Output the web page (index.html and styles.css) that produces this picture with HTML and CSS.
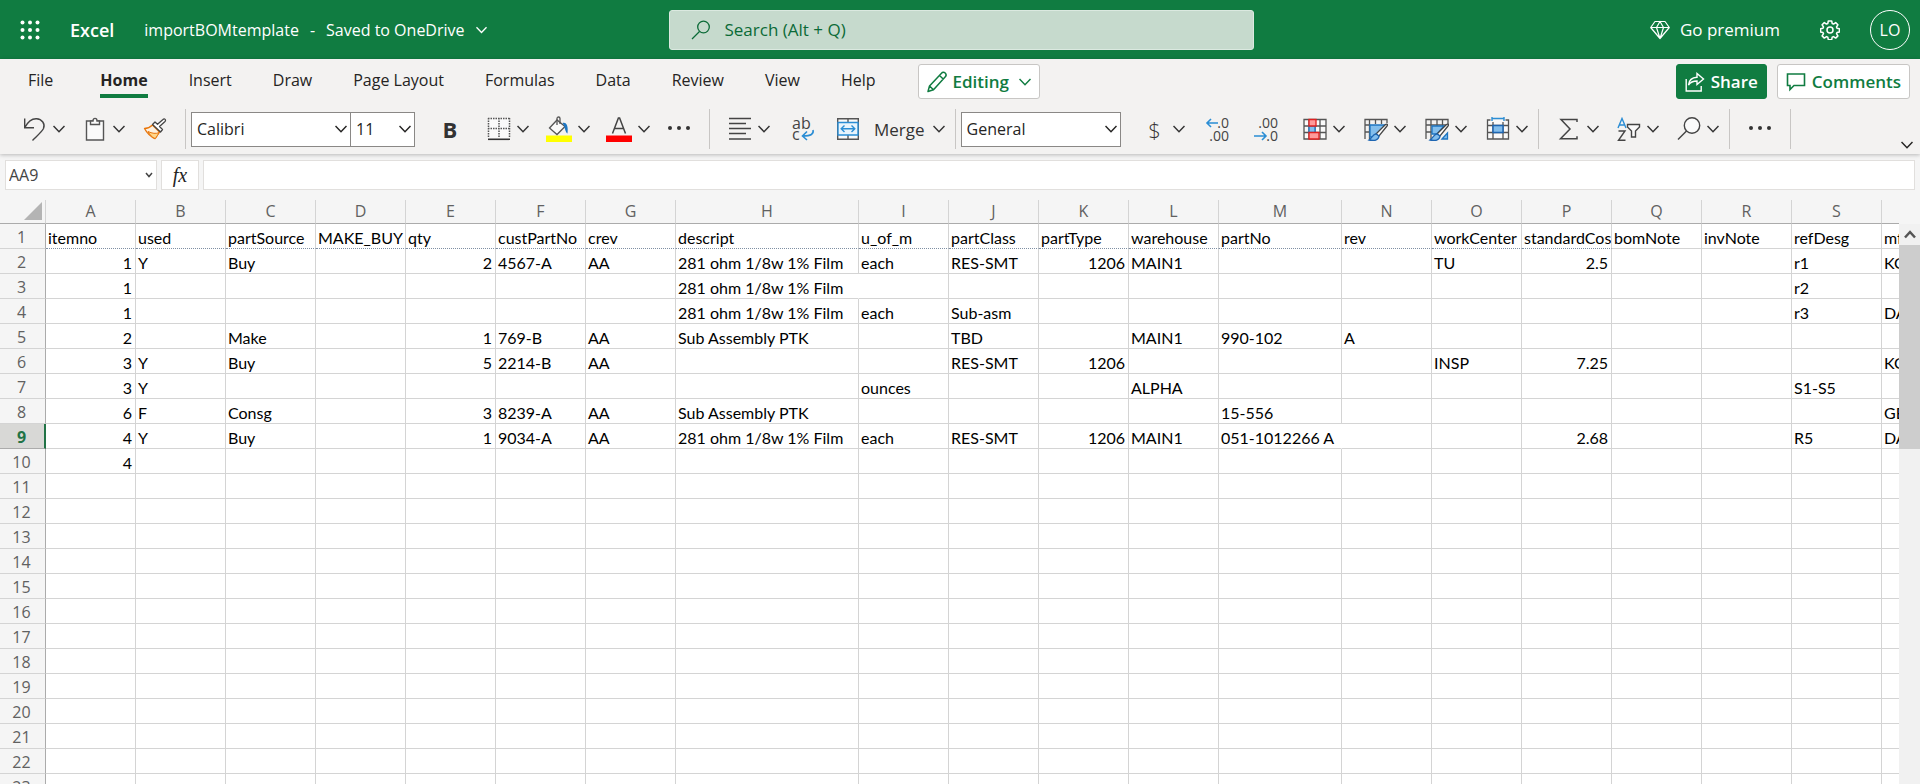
FILE: index.html
```html
<!DOCTYPE html>
<html lang="en">
<head>
    <meta charset="UTF-8">
    <meta name="viewport" content="width=device-width, initial-scale=1.0">
    <title>importBOMtemplate - Excel</title>
    <link rel="stylesheet" href="styles.css">
</head>
<body>
    <svg class="defs" width="0" height="0" aria-hidden="true">
        <symbol id="chevron" viewBox="0 0 12 8"><path d="M.5 1 6 6.700 11.500 1" fill="none" stroke="currentColor" stroke-width="1.500"/></symbol>
        <symbol id="dots" viewBox="0 0 24 24"><g fill="#333"><circle cx="3" cy="11" r="2"/><circle cx="12" cy="11" r="2"/><circle cx="21" cy="11" r="2"/></g></symbol>
    </svg>

    <header class="title-bar">
        <div class="title-left">
            <button class="waffle" aria-label="App launcher">
                <svg width="20" height="20" viewBox="0 0 20 20" fill="#fff">
                    <circle cx="2.500" cy="2.500" r="2"/><circle cx="10" cy="2.500" r="2"/><circle cx="17.500" cy="2.500" r="2"/>
                    <circle cx="2.500" cy="10" r="2"/><circle cx="10" cy="10" r="2"/><circle cx="17.500" cy="10" r="2"/>
                    <circle cx="2.500" cy="17.500" r="2"/><circle cx="10" cy="17.500" r="2"/><circle cx="17.500" cy="17.500" r="2"/>
                </svg>
            </button>
            <a class="app-name" href="#">Excel</a>
            <button class="file-name">
                <span>importBOMtemplate</span><span>-</span><span>Saved to OneDrive</span>
                <svg width="11" height="8"><use href="#chevron"/></svg>
            </button>
        </div>
        <label class="search">
            <svg width="20" height="20" viewBox="0 0 20 20" fill="none" stroke="#0b6a37" stroke-width="1.300"><circle cx="12.500" cy="7" r="5.800"/><path d="M8.500 11.500 1 19"/></svg>
            <input type="text" placeholder="Search (Alt + Q)" aria-label="Search">
        </label>
        <div class="title-right">
            <button class="premium">
                <svg width="20" height="20" viewBox="0 0 20 20" fill="none" stroke="#fff" stroke-width="1.200" stroke-linejoin="round"><path d="M5 1.500h10l4.300 6L10 18.500.7 7.500zM.7 7.500h18.600M6.500 7.500 10 18.500l3.500-11L10 1.500z"/></svg>
                Go premium
            </button>
            <button class="gear" aria-label="Settings">
                <svg width="20" height="20" viewBox="0 0 20 20" fill="none" stroke="#fff" stroke-width="1.500" stroke-linejoin="round"><circle cx="10" cy="10" r="3"/><path d="M8.300 1h3.400l.5 2.500 1.300.6 2.200-1.500 2.200 2.200-1.400 2.200.5 1.300 2.400.4v3.200l-2.400.5-.5 1.300 1.400 2.200-2.200 2.200-2.200-1.500-1.300.6-.5 2.500H8.300l-.5-2.500-1.300-.6-2.200 1.500-2.200-2.200 1.400-2.200-.5-1.300-2.400-.5V8.700L3 8.300 3.500 7 2.100 4.800l2.200-2.200 2.200 1.500 1.300-.6z"/></svg>
            </button>
            <button class="avatar">LO</button>
        </div>
    </header>

    <section class="ribbon">
        <div class="tab-row">
            <nav class="tabs">
                <a class="tab file" href="#">File</a>
                <a class="tab active" href="#">Home</a>
                <a class="tab" href="#">Insert</a>
                <a class="tab" href="#">Draw</a>
                <a class="tab" href="#">Page Layout</a>
                <a class="tab" href="#">Formulas</a>
                <a class="tab" href="#">Data</a>
                <a class="tab" href="#">Review</a>
                <a class="tab" href="#">View</a>
                <a class="tab" href="#">Help</a>
            </nav>
            <button class="btn editing">
                <svg width="20" height="22" viewBox="0 0 20 22" fill="none" stroke="currentColor" stroke-width="1.500" stroke-linejoin="round"><path d="M1 20.500 2.500 15 14.500 2.200a2.400 2.400 0 0 1 3.800 3.500L6.500 18.800zM12.500 4.500l3.700 3.500M2.500 15l4 3.800"/></svg>
                Editing
                <svg class="chev" width="12" height="8"><use href="#chevron"/></svg>
            </button>
            <div class="tab-actions">
                <button class="btn share">
                    <svg width="20" height="20" viewBox="0 0 20 20" fill="none" stroke="currentColor" stroke-width="1.400"><path d="M1.200 7v12h15v-5M3.500 13C4 8.500 7 5.500 12 5.300V1.500L18.500 7 12 12.500V9C8.500 9 5.500 10 3.500 13z"/></svg>
                    Share
                </button>
                <button class="btn comments">
                    <svg width="20" height="20" viewBox="0 0 20 20" fill="none" stroke="currentColor" stroke-width="1.600"><path d="M1.500 2h17v11.500H8L4 17.500v-4H1.500z"/></svg>
                    Comments
                </button>
            </div>
        </div>

        <div class="toolbar">
            <div class="group first">
                <button class="tool" aria-label="Undo">
                    <svg width="24" height="24" viewBox="0 0 24 24" fill="none" stroke="#444" stroke-width="1.400"><path d="M1.700 1.500v9.300H11M2 10.300C5 4.500 9 1.500 13.500 1.700 19 2 22.500 7 20.500 11.500 19 14.500 15 18 9.500 23.500"/></svg>
                    <svg class="chev" width="12" height="8"><use href="#chevron"/></svg>
                </button>
                <button class="tool" aria-label="Paste">
                    <svg width="24" height="24" viewBox="0 0 24 24" fill="#fafafa" stroke="#555" stroke-width="1.400"><path d="M3.500 4h17v19h-17z"/><path d="M7.500 7.500V4H10c0-3.500 4-3.500 4 0h2.500v3.500z"/></svg>
                    <svg class="chev" width="12" height="8"><use href="#chevron"/></svg>
                </button>
                <button class="tool" aria-label="Format painter">
                    <svg width="24" height="24" viewBox="0 0 24 24" fill="none" stroke-linejoin="round"><path d="M1.500 11.500c3.500 0 6-1.500 8-3.500l7 7c-2 2-2.500 4.500-4.500 6.500C8 20 4 16 1.500 11.500z" fill="#fdf1e0" stroke="#e8750a" stroke-width="1.400"/><path d="M5 14.500c4 2 8 2.500 11.500 1-2 2-2.500 4.500-4.500 6C9 20.500 7 18 5 14.500z" fill="#ffd68a" stroke="#e8750a"/><path d="m9.500 7.500 8 7.500 2-2.500-3-3 5.500-5c1.500-1.500-.5-3.500-2-2L14.500 7.300 12 5z" fill="#fff" stroke="#444" stroke-width="1.300"/></svg>
                </button>
            </div>
            <div class="group">
                <div class="fonts">
                    <label class="picker family">
                        <select aria-label="Font"><option>Calibri</option></select>
                        <svg class="chev" width="12" height="8"><use href="#chevron"/></svg>
                    </label>
                    <label class="picker size">
                        <select aria-label="Font size"><option>11</option></select>
                        <svg class="chev" width="12" height="8"><use href="#chevron"/></svg>
                    </label>
                </div>
                <button class="tool bold">B</button>
                <button class="tool" aria-label="Borders">
                    <svg width="24" height="24" viewBox="0 0 24 24" fill="none" stroke="#555"><path d="M1.500 1.500h21v20h-21z" fill="#fafafa" stroke="none"/><path d="M1 1.500h22M1 11.500h22M1.500 1v20M12 1v20M22.500 1v20" stroke-width="1.500" stroke-dasharray="1.500 1"/><path d="M1 22.300h22" stroke="#333" stroke-width="1.600"/></svg>
                    <svg class="chev" width="12" height="8"><use href="#chevron"/></svg>
                </button>
                <button class="tool swatch" aria-label="Fill color">
                    <svg width="26" height="26" viewBox="0 0 26 26"><path d="M0 19.500h26V26H0z" fill="#ff0"/><path d="M11 4 3.500 12l7.500 6.500 8-8z" fill="#fafafa" stroke="#555" stroke-width="1.300"/><path d="M11 9V2.500c0-2 3-2 3 0V8" fill="none" stroke="#555" stroke-width="1.300"/><path d="M16.500 7c4-1.500 6 3 5 10.500-2-1-2.500-5-3.500-8z" fill="#1e76c2"/></svg>
                    <svg class="chev" width="12" height="8"><use href="#chevron"/></svg>
                </button>
                <button class="tool swatch" aria-label="Font color">
                    <svg width="26" height="26" viewBox="0 0 26 26"><path d="M0 19.500h26V26H0z" fill="red"/><path d="M6.500 17.500 12.400 2h1.200l5.900 15.500M8.500 12.500h9" fill="none" stroke="#444" stroke-width="1.500"/></svg>
                    <svg class="chev" width="12" height="8"><use href="#chevron"/></svg>
                </button>
                <button class="tool" aria-label="More font options"><svg width="24" height="24"><use href="#dots"/></svg></button>
            </div>
            <div class="group tight">
                <button class="tool" aria-label="Align">
                    <svg width="24" height="24" viewBox="0 0 24 24" stroke="#444" stroke-width="1.500"><path d="M1 1.500h22M1 6.500h17M1 11.500h22M1 16.500h17M1 22h22"/></svg>
                    <svg class="chev" width="12" height="8"><use href="#chevron"/></svg>
                </button>
                <button class="tool wide" aria-label="Wrap text">
                    <svg class="lettered" width="24" height="24" viewBox="0 0 24 24"><text x="1" y="12" class="glyph">ab</text><text x="1" y="23" class="glyph">c</text><path d="M22 13c1 4-2 6-10 6M16 14.500 11.500 19l4.500 4" fill="none" stroke="#2a8dd4" stroke-width="1.600"/></svg>
                </button>
                <button class="tool merge">
                    <svg width="24" height="24" viewBox="0 0 24 24" fill="none" stroke="#555" stroke-width="1.400"><path d="M1.700 1.700h20.600v20.600H1.700zM12 2v20" fill="#fafafa"/><path d="M2 5.500h20v12.500H2z" fill="#e8f4fc" stroke="#2a8dd4"/><path d="M5.500 11.800h13M8.500 8.500l-3.300 3.300 3.300 3.300M15.500 8.500l3.300 3.300-3.300 3.300" stroke="#2a8dd4"/></svg>
                    <span>Merge</span>
                    <svg class="chev" width="12" height="8"><use href="#chevron"/></svg>
                </button>
            </div>
            <div class="group tight">
                <label class="picker format">
                    <select aria-label="Number format"><option>General</option></select>
                    <svg class="chev" width="12" height="8"><use href="#chevron"/></svg>
                </label>
                <button class="tool currency" aria-label="Accounting format">
                    <span>$</span>
                    <svg class="chev" width="12" height="8"><use href="#chevron"/></svg>
                </button>
                <button class="tool wide" aria-label="Increase decimal">
                    <svg class="lettered" width="24" height="24" viewBox="0 0 24 24"><text x="23" y="11" text-anchor="end" class="glyph digits">.0</text><text x="23" y="24" text-anchor="end" class="glyph digits">.00</text><path d="M12 6H1M5 2 1 6l4 4" fill="none" stroke="#2a8dd4" stroke-width="1.600"/></svg>
                </button>
                <button class="tool wide" aria-label="Decrease decimal">
                    <svg class="lettered" width="24" height="24" viewBox="0 0 24 24"><text x="24" y="11" text-anchor="end" class="glyph digits">.00</text><text x="24" y="24" text-anchor="end" class="glyph digits">.0</text><path d="M0 19h12M8 15l4 4-4 4" fill="none" stroke="#2a8dd4" stroke-width="1.600"/></svg>
                </button>
                <div class="styles">
                    <button class="tool" aria-label="Conditional formatting">
                        <svg width="24" height="24" viewBox="0 0 24 24" fill="none" stroke="#555" stroke-width="1.300"><path d="M1 2.500h22v19.500H1zM1 9h22M1 15.500h22M6 2.500V22M17 2.500V22M12 2.500V22" fill="#fafafa"/><path d="M6 9h6v6.500H6z" fill="#83beec" stroke="#1e76c2"/><path d="M6 2.500h7V9H6zM6 15.500h10V22H6z" fill="#ff9a9a" stroke="#e02020"/></svg>
                        <svg class="chev" width="12" height="8"><use href="#chevron"/></svg>
                    </button>
                    <button class="tool" aria-label="Format as table">
                        <svg width="24" height="24" viewBox="0 0 24 24" fill="none" stroke="#555" stroke-width="1.300"><path d="M1 22V2.500h22V6M1 8h4.500M1 15h4.500M5.500 2.500V22M11.500 2.500V7M17.500 2.500V7"/><path d="M6 8h15L12 20H6z" fill="#83beec" stroke="#1e76c2"/><path d="M12 17 21.500 7.500c1.500-1 2.500 0 1.500 1.500L15 19z" fill="#fff" stroke="#444"/><path d="M12 17c-3 0-3.500 3.500-7 6 5 1 9.500.5 10-4z" fill="#83beec" stroke="#1e66b2"/></svg>
                        <svg class="chev" width="12" height="8"><use href="#chevron"/></svg>
                    </button>
                    <button class="tool" aria-label="Cell styles">
                        <svg width="24" height="24" viewBox="0 0 24 24" fill="none" stroke="#555" stroke-width="1.300"><path d="M1 22V2.500h22V8M1 8h22M1 15h6M6 2.500V22M12 2.500V9M17.500 2.500V9"/><path d="M7 9h12l-7 8H7zM17 22l5.500-6v6z" fill="#83beec" stroke="#1e76c2"/><path d="M12 17 21.500 7.500c1.500-1 2.500 0 1.500 1.500L15 19z" fill="#fff" stroke="#444"/><path d="M12 17c-3 0-3.500 3.500-7 6 5 1 9.500.5 10-4z" fill="#83beec" stroke="#1e66b2"/></svg>
                        <svg class="chev" width="12" height="8"><use href="#chevron"/></svg>
                    </button>
                    <button class="tool" aria-label="Insert cells">
                        <svg width="24" height="24" viewBox="0 0 24 24" fill="none" stroke="#555" stroke-width="1.300"><path d="M4.500 3H1.500v19h21V3h-3M1.500 8.500h21M1.500 15.500h21M7 5v17M17 5v17" fill="#fafafa"/><path d="M7 8.500h10v7H7z" fill="#83beec" stroke="#1e66b2" stroke-width="1.500"/><path d="M6 1.500h12M6 0v4M18 0v4" stroke="#2a8dd4" stroke-width="1.400"/></svg>
                        <svg class="chev" width="12" height="8"><use href="#chevron"/></svg>
                    </button>
                </div>
            </div>
            <div class="group tight">
                <button class="tool" aria-label="AutoSum">
                    <svg width="24" height="24" viewBox="0 0 24 24" fill="none" stroke="#444" stroke-width="1.500"><path d="M20 5V2.500H4l9 9.500L3.500 21.800H20v-2.500"/></svg>
                    <svg class="chev" width="12" height="8"><use href="#chevron"/></svg>
                </button>
                <button class="tool" aria-label="Sort and filter">
                    <svg width="24" height="24" viewBox="0 0 24 24" fill="none" stroke-width="1.400"><path d="M1 11 5 1.500 9 11M2.500 8h5" stroke="#2a8dd4"/><path d="M1.500 14H8L1.500 23.300H8.500" stroke="#444"/><path d="M10.500 7.500h12v2.500L18.500 14v6h-4v-6l-4-4z" fill="#fafafa" stroke="#444"/></svg>
                    <svg class="chev" width="12" height="8"><use href="#chevron"/></svg>
                </button>
                <button class="tool" aria-label="Find">
                    <svg width="24" height="24" viewBox="0 0 24 24" fill="#fafafa" stroke="#444" stroke-width="1.400"><circle cx="15" cy="8.500" r="7.700"/><path d="M9.500 14 1 22.500"/></svg>
                    <svg class="chev" width="12" height="8"><use href="#chevron"/></svg>
                </button>
            </div>
            <div class="group">
                <button class="tool" aria-label="More commands"><svg width="24" height="24"><use href="#dots"/></svg></button>
            </div>
            <button class="collapse" aria-label="Collapse ribbon"><svg width="12" height="8"><use href="#chevron"/></svg></button>
        </div>
    </section>

    <section class="formula-bar">
        <label class="name-box">
            <input type="text" value="AA9" aria-label="Name box">
            <svg width="8" height="6" viewBox="0 0 8 6"><path d="M1 1l3 3.500L7 1" fill="none" stroke="#444" stroke-width="1.500"/></svg>
        </label>
        <button class="fx">fx</button>
        <input class="formula" type="text" aria-label="Formula">
    </section>

    <main class="sheet">
        <div class="grid-wrap">
            <table class="grid">
                <colgroup id="cols"></colgroup>
                <thead><tr id="colHeaders"></tr></thead>
                <tbody id="rows"></tbody>
            </table>
        </div>
        <div class="scrollbar">
            <button class="scroll-up" aria-label="Scroll up">
                <svg width="12" height="9" viewBox="0 0 12 9" fill="none" stroke="#555" stroke-width="2.500"><path d="M1 7.500 6 2l5 5.500"/></svg>
            </button>
            <div class="thumb"></div>
        </div>
    </main>

    <script>
        const columns = "ABCDEFGHIJKLMNOPQRST".split("");
        const wide = { H: "col-descript", M: "col-partno" };
        const activeRow = 9;
        const rowCount = 23;

        const data = {
            1: { A: "itemno", B: "used", C: "partSource", D: "MAKE_BUY", E: "qty", F: "custPartNo", G: "crev", H: "descript", I: "u_of_m", J: "partClass", K: "partType", L: "warehouse", M: "partNo", N: "rev", O: "workCenter", P: "standardCost", Q: "bomNote", R: "invNote", S: "refDesg", T: "mfgr" },
            2: { A: 1, B: "Y", C: "Buy", E: 2, F: "4567-A", G: "AA", H: "281 ohm 1/8w 1% Film", I: "each", J: "RES-SMT", K: 1206, L: "MAIN1", O: "TU", P: 2.5, S: "r1", T: "KOA" },
            3: { A: 1, H: "281 ohm 1/8w 1% Film", S: "r2" },
            4: { A: 1, H: "281 ohm 1/8w 1% Film", I: "each", J: "Sub-asm", S: "r3", T: "DALE" },
            5: { A: 2, C: "Make", E: 1, F: "769-B", G: "AA", H: "Sub Assembly PTK", J: "TBD", L: "MAIN1", M: "990-102", N: "A" },
            6: { A: 3, B: "Y", C: "Buy", E: 5, F: "2214-B", G: "AA", J: "RES-SMT", K: 1206, O: "INSP", P: 7.25, T: "KOA" },
            7: { A: 3, B: "Y", I: "ounces", L: "ALPHA", S: "S1-S5" },
            8: { A: 6, B: "F", C: "Consg", E: 3, F: "8239-A", G: "AA", H: "Sub Assembly PTK", M: "15-556", T: "GE" },
            9: { A: 4, B: "Y", C: "Buy", E: 1, F: "9034-A", G: "AA", H: "281 ohm 1/8w 1% Film", I: "each", J: "RES-SMT", K: 1206, L: "MAIN1", M: "051-1012266 A", P: 2.68, S: "R5", T: "DALE" },
            10: { A: 4 }
        };

        // cells whose text spills into the next one have no right line
        const spills = ["H3", "M9"];

        let cols = '<col class="col-head">';
        let heads = '<th class="corner"><svg width="18" height="18"><path d="M18 0v18H0z" fill="#b4b4b4"/></svg></th>';
        for (const c of columns) {
            cols += `<col class="${wide[c] || 'col-std'}">`;
            heads += `<th scope="col">${c}</th>`;
        }
        document.getElementById("cols").innerHTML = cols;
        document.getElementById("colHeaders").innerHTML = heads;

        let body = "";
        for (let r = 1; r <= rowCount; r++) {
            const row = data[r] || {};
            body += `<tr><th scope="row" class="${r === activeRow ? 'active' : ''}">${r}</th>`;
            columns.forEach((c, i) => {
                const value = row[c] === undefined ? "" : row[c];
                const classes = [];
                if (typeof value === "number") classes.push("num");
                if (spills.includes(c + r)) classes.push("spill");
                if (r === 1 && i < 16) classes.push("print-edge");
                body += `<td class="${classes.join(' ')}">${value}</td>`;
            });
            body += "</tr>";
        }
        document.getElementById("rows").innerHTML = body;
    </script>
</body>
</html>
```
FILE: styles.css
```css
* {
    box-sizing: border-box;
}

body {
    margin: 0;
    height: 100vh;
    display: flex;
    flex-direction: column;
    overflow: hidden;
    font-family: "Open Sans", "Noto Sans", sans-serif;
    font-size: 16px;
    color: #252423;
    background-color: #f5f5f5;
}

button, input, select {
    font: inherit;
    color: inherit;
    border: none;
    background: none;
    padding: 0;
    margin: 0;
}

a {
    color: inherit;
    text-decoration: none;
}

svg {
    display: block;
    flex: none;
}

.defs {
    position: absolute;
}

/* title bar */
.title-bar {
    display: grid;
    grid-template-columns: 1fr minmax(200px, 585px) 1fr;
    align-items: center;
    height: 59px;
    flex: none;
    padding-right: 10px;
    padding-left: 12px;
    background-color: #107c41;
    color: #fff;
}

.title-left, .title-right, .file-name, .premium {
    display: flex;
    align-items: center;
    white-space: nowrap;
}

.waffle {
    padding: 0 8px;
}

.app-name {
    margin-left: 22px;
    font-size: 18px;
    font-weight: 600;
}

.file-name {
    margin-left: 30px;
    gap: 11px;
}

.search {
    display: flex;
    align-items: center;
    gap: 14px;
    height: 40px;
    padding-left: 21px;
    background-color: #c6dacd;
    border: 1px solid #dbe9e0;
    border-radius: 3px;
}

.search input {
    flex: 1;
    min-width: 0;
    font-size: 17px;
    outline: none;
}

.search input::placeholder {
    color: #0b6a37;
    opacity: 1;
}

.title-right {
    justify-content: flex-end;
}

.premium {
    gap: 10px;
    font-size: 17px;
}

.gear {
    margin: 0 30px 0 40px;
}

.avatar {
    width: 40px;
    height: 40px;
    border: 1px solid #fff;
    border-radius: 50%;
}

/* ribbon */
.ribbon {
    flex: none;
    background-color: #f3f2f1;
    box-shadow: 0 1px 4px rgba(0, 0, 0, 0.25);
}

.tab-row {
    display: flex;
    align-items: flex-start;
    height: 50px;
    padding: 5px 10px 0 28px;
}

.tabs {
    display: flex;
    gap: 41px;
    white-space: nowrap;
}

.tab {
    padding-top: 2px;
    line-height: 28px;
    border-bottom: 4px solid transparent;
}

.tab.file {
    margin-right: 6px;
}

.tab.active {
    font-weight: 700;
    border-bottom-color: #107c41;
}

.btn {
    display: flex;
    align-items: center;
    gap: 6px;
    height: 35px;
    padding: 0 8px;
    border: 1px solid #c8c6c4;
    border-radius: 3px;
    background-color: #fff;
    color: #107c41;
    font-size: 17px;
    font-weight: 600;
}

.editing {
    margin-left: 42px;
}

.editing .chev {
    margin-left: 4px;
}

.tab-actions {
    display: flex;
    gap: 10px;
    margin-left: auto;
}

.share {
    border-color: #107c41;
    background-color: #107c41;
    color: #fff;
}

.toolbar {
    display: flex;
    height: 45px;
    padding: 0 7px 5px 0;
}

.group {
    display: flex;
    align-items: center;
    padding: 0 9px;
    border-right: 1px solid #c8c6c4;
}

.group.first {
    padding-left: 14px;
}

.group.tight {
    padding-right: 1px;
}

.tool {
    display: flex;
    align-items: center;
    justify-content: center;
    gap: 6px;
    height: 36px;
    padding: 0 9px;
    color: #333;
}

.tool.swatch {
    padding: 0 8px;
}

.tool.wide {
    padding: 0 12px;
}

.bold {
    width: 42px;
    margin: 0 7px 0 14px;
    font-size: 22px;
    font-weight: 700;
}

.tool.merge {
    gap: 8px;
    font-size: 17px;
}

.merge span {
    margin-left: 6px;
}

.styles {
    display: flex;
    gap: 1px;
    margin-left: 4px;
}

.currency span {
    width: 24px;
    font-size: 22px;
    font-weight: 300;
}

.lettered {
    overflow: visible;
}

.glyph {
    font-size: 16px;
    fill: #444;
}

.glyph.digits {
    font-size: 14px;
}

.fonts {
    display: flex;
}

.group:has(.picker) {
    padding-left: 5px;
}

/* the chevron shares one grid cell with the select */
.picker {
    display: grid;
    align-items: center;
    height: 35px;
    border: 1px solid #8a8886;
    background-color: #fff;
}

.picker select, .picker .chev {
    grid-area: 1 / 1;
}

.picker select {
    width: 100%;
    height: 33px;
    padding-left: 5px;
    appearance: none;
    outline: none;
}

.picker .chev {
    justify-self: end;
    margin-right: 3px;
    pointer-events: none;
}

.family {
    width: 160px;
}

.size {
    width: 64px;
    border-left: none;
}

.format {
    width: 160px;
    margin-right: 13px;
}

.collapse {
    align-self: flex-end;
    margin-left: auto;
}

/* formula bar */
.formula-bar {
    display: flex;
    gap: 4px;
    flex: none;
    padding: 6px 5px 10px;
}

.name-box, .fx, .formula {
    height: 30px;
    border: 1px solid #e1dfdd;
    background-color: #fff;
}

.name-box {
    display: flex;
    align-items: center;
    width: 152px;
    padding: 0 3px;
    color: #444;
}

.name-box input {
    flex: 1;
    min-width: 0;
    outline: none;
}

.fx {
    width: 38px;
    font-family: "Liberation Serif", serif;
    font-size: 20px;
    font-style: italic;
}

.formula {
    flex: 1;
    outline: none;
}

/* sheet */
.sheet {
    flex: 1;
    min-height: 0;
    display: flex;
}

.grid-wrap {
    flex: 1;
    min-width: 0;
    overflow: hidden;
}

.grid {
    table-layout: fixed;
    width: 1px;
    border-collapse: separate;
    border-spacing: 0;
    background-color: #fff;
}

.col-head {
    width: 46px;
}

.col-std {
    width: 90px;
}

.col-descript {
    width: 183px;
}

.col-partno {
    width: 123px;
}

.grid th, .grid td {
    height: 25px;
    border-right: 1px solid #d4d4d4;
    border-bottom: 1px solid #d4d4d4;
    white-space: nowrap;
    overflow: hidden;
}

.grid th {
    padding: 0;
    background-color: #f5f5f5;
    color: #616161;
    font-weight: 400;
    line-height: 22px;
    text-align: center;
}

.grid thead th {
    height: 24px;
    padding-bottom: 1px;
    border-bottom-color: #ababab;
}

.grid tbody th {
    padding: 2px 2px 0 0;
    border-right-color: #ababab;
}

.grid th.corner svg {
    margin-left: 24px;
}

.grid tbody th.active {
    padding-right: 1px;
    border-right: 2px solid #217346;
    border-bottom-color: #ababab;
    background-color: #d8d8d6;
    color: #217346;
    font-weight: 700;
}

.grid td {
    padding: 2px 3px 0 2px;
    font-family: Lato, "Open Sans", sans-serif;
    line-height: 21px;
    color: #000;
}

.grid td.num {
    text-align: right;
}

.grid td.spill {
    border-right-color: transparent;
}

.grid td.print-edge {
    border-bottom: 1px dotted #7f8fa3;
}

.scrollbar {
    width: 21px;
    margin-top: 24px;
    background-color: #f1f1f1;
}

.scroll-up {
    display: flex;
    align-items: center;
    justify-content: center;
    width: 21px;
    height: 21px;
}

.thumb {
    height: 204px;
    background-color: #cdcdcd;
}
```
